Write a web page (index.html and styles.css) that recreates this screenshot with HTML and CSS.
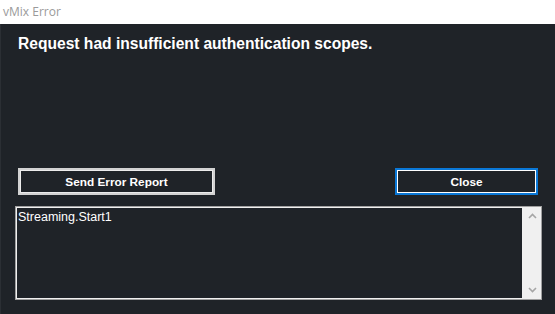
FILE: index.html
```html
<!DOCTYPE html>
<html lang="en">

<head>
  <meta charset="UTF-8">
  <title>vMix Error</title>
  <link rel="stylesheet" href="styles.css">
</head>

<body>
  <div class="window">
    <!-- Title bar -->
    <div class="titlebar">vMix Error</div>

    <!-- Dialog body -->
    <div class="dialog">
      <h1 class="message">Request had insufficient authentication scopes.</h1>

      <div class="actions">
        <button class="btn btn-report">Send Error Report</button>
        <button class="btn btn-close">Close</button>
      </div>

      <div class="details">
        <div class="details-text">Streaming.Start1</div>
        <div class="scrollbar">
          <svg width="9" height="6" viewBox="0 0 9 6"><path d="M1 5 L4.5 1.5 L8 5" fill="none" stroke="#a6a6a6" stroke-width="1.6"/></svg>
          <svg width="9" height="6" viewBox="0 0 9 6"><path d="M1 1 L4.5 4.5 L8 1" fill="none" stroke="#a6a6a6" stroke-width="1.6"/></svg>
        </div>
      </div>
    </div>
  </div>
</body>

</html>
```

FILE: styles.css
```css
/* General */
body {
  margin: 0;
  padding: 0;
  background-color: #1f2328;
  font-family: 'Liberation Sans', Arial, sans-serif;
}

.window {
  width: 555px;
  height: 314px;
  display: flex;
  flex-direction: column;
}

/* Title bar */
.titlebar {
  height: 24px;
  line-height: 24px;
  padding-left: 3px;
  background-color: #fff;
  color: #9a9a9a;
  font-family: 'Open Sans', 'Noto Sans', sans-serif;
  font-size: 12px;
}

/* Dialog body */
.dialog {
  flex: 1;
  display: flex;
  flex-direction: column;
  background-color: #1f2328;
  border-left: 1px solid #2b2f34;
}

.message {
  margin: 11px 0 0 17px;
  font-size: 15.6px;
  line-height: 18px;
  font-weight: 700;
  color: #fff;
}

/* Buttons */
.actions {
  display: flex;
  justify-content: space-between;
  margin-top: 115px;
  padding: 0 17px 0 17px;
}

.btn {
  height: 27px;
  padding: 0;
  background-color: #1f2328;
  color: #fff;
  font-family: 'Liberation Sans', Arial, sans-serif;
  font-weight: 700;
  font-size: 11.8px;
}

.btn-report {
  width: 197px;
  border: 2px solid #d2d2d2;
  box-shadow: inset 0 0 0 1px #ececec;
}

.btn-close {
  width: 143px;
  border: 2px solid #0a78d7;
  box-shadow: inset 0 0 0 1px #fff;
}

/* Details box */
.details {
  display: flex;
  height: 94px;
  margin: 11px 13px 0 14px;
  border: 1px solid #a0a0a0;
  box-sizing: border-box;
}

.details-text {
  flex: 1;
  border: 1px solid #f0f0f0;
  padding: 2px 1px;
  color: #fff;
  font-size: 12.5px;
  line-height: 14px;
}

.scrollbar {
  width: 18px;
  background-color: #f0f0f0;
  display: flex;
  flex-direction: column;
  justify-content: space-between;
  align-items: center;
  padding: 6px 0 6px 0;
}
```
